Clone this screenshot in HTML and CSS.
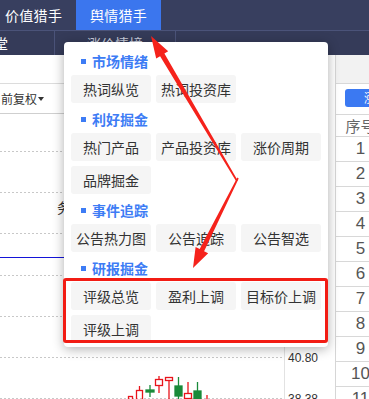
FILE: index.html
```html
<!DOCTYPE html>
<html lang="zh-CN">
<head>
<meta charset="utf-8">
<title>舆情猎手</title>
<link rel="stylesheet" href="styles.css">
</head>
<body>
<div class="app">
  <header class="topnav">
    <div class="tab">价值猎手</div>
    <div class="tab active">舆情猎手</div>
  </header>
  <nav class="subnav">
    <div class="subitem first">讲堂</div>
    <div class="subitem second">涨价情境</div>
    <div class="subitem"></div>
  </nav>
  <main class="content">
    <section class="chart">
      <div class="toolbar"></div>
      <div class="options"><span class="fq">前复权</span><span class="caret"></span></div>
      <svg class="kline" width="284" height="285" viewBox="0 0 284 285">
        <g stroke="#c8c8c8" stroke-width="1" stroke-dasharray="2 2">
          <line x1="0" y1="37.5" x2="284" y2="37.5"/>
          <line x1="0" y1="78.5" x2="284" y2="78.5"/>
          <line x1="0" y1="119.5" x2="284" y2="119.5"/>
          <line x1="0" y1="161.5" x2="284" y2="161.5"/>
          <line x1="0" y1="202.5" x2="284" y2="202.5"/>
          <line x1="0" y1="243.5" x2="284" y2="243.5"/>
          <line x1="0" y1="284.5" x2="284" y2="284.5"/>
        </g>
        <line x1="0" y1="143.5" x2="284" y2="143.5" stroke="#1414d8" stroke-width="1"/>
        <text x="57" y="99" font-size="14" fill="#333" font-family="Noto Sans CJK SC, sans-serif">务</text>
        <g fill="none" stroke="#e8141b" stroke-width="1.3">
          <rect x="128.5" y="282.5" width="4" height="5"/>
          <rect x="136.5" y="276.5" width="6" height="10"/>
          <line x1="139.5" y1="272" x2="139.5" y2="276.5"/>
          <rect x="155.5" y="265.5" width="7" height="6"/>
          <line x1="159" y1="262" x2="159" y2="265.5"/>
          <line x1="159" y1="271.5" x2="159" y2="279"/>
          <rect x="165.5" y="263.5" width="7" height="3"/>
          <line x1="169" y1="266.5" x2="169" y2="285"/>
          <rect x="184.5" y="279.5" width="7" height="5"/>
          <line x1="188" y1="268" x2="188" y2="279.5"/>
          <line x1="207" y1="281" x2="207" y2="285"/>
        </g>
        <g fill="#1a8a3a" stroke="#1a8a3a" stroke-width="1.3">
          <rect x="146" y="276" width="8" height="2"/>
          <line x1="150" y1="271" x2="150" y2="283"/>
          <rect x="175" y="272" width="7" height="10"/>
          <line x1="178.5" y1="263" x2="178.5" y2="285"/>
          <rect x="194" y="277" width="7" height="10"/>
          <line x1="197.5" y1="268" x2="197.5" y2="285"/>
        </g>
      </svg>
    </section>
    <section class="axis">
      <div class="price">40.80</div>
      <div class="price">38.38</div>
    </section>
    <section class="table">
      <div class="thead-bar"></div>
      <div class="btn-row"><span class="blue-btn">涨停</span></div>
      <div class="row head">序号</div>
      <div class="row">1</div>
      <div class="row">2</div>
      <div class="row">3</div>
      <div class="row">4</div>
      <div class="row">5</div>
      <div class="row">6</div>
      <div class="row">7</div>
      <div class="row">8</div>
      <div class="row">9</div>
      <div class="row">10</div>
      <div class="row">11</div>
    </section>
  </main>

  <div class="popup">
    <div class="sec-title">市场情绪</div>
    <div class="btns">
      <div class="btn">热词纵览</div>
      <div class="btn">热词投资库</div>
    </div>
    <div class="sec-title">利好掘金</div>
    <div class="btns">
      <div class="btn">热门产品</div>
      <div class="btn">产品投资库</div>
      <div class="btn">涨价周期</div>
      <div class="btn">品牌掘金</div>
    </div>
    <div class="sec-title">事件追踪</div>
    <div class="btns">
      <div class="btn">公告热力图</div>
      <div class="btn">公告追踪</div>
      <div class="btn">公告智选</div>
    </div>
    <div class="sec-title">研报掘金</div>
    <div class="btns">
      <div class="btn">评级总览</div>
      <div class="btn">盈利上调</div>
      <div class="btn">目标价上调</div>
      <div class="btn">评级上调</div>
    </div>
  </div>

  <div class="mark"></div>

  <svg class="arrows" width="369" height="399" viewBox="0 0 369 399">
    <polygon fill="#f5221b" points="151,36 168.2,51.3 164.4,53.6 237.7,180.6 236.3,181.4 160.1,56.2 156.2,58.5"/>
    <polygon fill="#f5221b" points="193,268 208.2,253.2 204.1,251.2 238.7,178.4 237.3,177.6 199.7,249 195.6,247"/>
  </svg>
</div>
</body>
</html>
```
FILE: styles.css
```css
html, body {
  margin: 0;
  padding: 0;
}
body {
  width: 369px;
  height: 399px;
  overflow: hidden;
  background: #fff;
  font-family: "Noto Sans CJK SC", "Microsoft YaHei", sans-serif;
}
.app {
  position: relative;
  width: 369px;
  height: 399px;
  overflow: hidden;
}
.topnav {
  display: flex;
  height: 30px;
  background: #383f5f;
}
.tab {
  color: #fff;
  font-size: 14px;
  line-height: 30px;
  width: 76px;
  box-sizing: border-box;
  padding-left: 5px;
  letter-spacing: 0.3px;
}
.tab.active {
  width: 85px;
  padding-left: 0;
  text-align: center;
  background: #3b76ee;
}
.subnav {
  display: flex;
  height: 24px;
  background: #353b59;
  border-top: 1px solid #4b5379;
}
.subitem {
  font-size: 14px;
  line-height: 24px;
  color: #fff;
  border-right: 1px solid #4b5379;
  white-space: nowrap;
  overflow: hidden;
}
.subitem.first {
  width: 54px;
  text-indent: -20px;
}
.subitem.second {
  width: 120px;
  text-align: center;
  color: #c9cddb;
}
.subitem:last-child {
  border-right: none;
  flex: 1;
}
.content {
  display: grid;
  grid-template-columns: 284px 51px 50px;
  height: 344px;
}
.chart {
  display: flex;
  flex-direction: column;
  overflow: hidden;
}
.toolbar {
  height: 28px;
  border-bottom: 1px solid #dcdcdc;
  flex: none;
}
.options {
  height: 29px;
  border-bottom: 1px solid #cfcfcf;
  display: flex;
  align-items: center;
  padding-left: 1px;
  flex: none;
}
.fq {
  font-size: 12px;
  color: #333;
}
.caret {
  width: 0;
  height: 0;
  border-left: 3.5px solid transparent;
  border-right: 3.5px solid transparent;
  border-top: 4px solid #333;
  margin-left: 1px;
}
.kline {
  display: block;
  flex: none;
}
.axis {
  border-left: 1px solid #e2e2e2;
  display: flex;
  flex-direction: column;
  padding-top: 295px;
  padding-left: 3px;
  gap: 25px;
}
.price {
  font-size: 12px;
  line-height: 16px;
  color: #333;
  font-family: "Liberation Sans", Arial, sans-serif;
}
.table {
  border-left: 1px solid #d6d6d6;
  display: flex;
  flex-direction: column;
}
.thead-bar {
  height: 28px;
  background: #f2f2f2;
  border-bottom: 1px solid #d8d8d8;
  flex: none;
}
.btn-row {
  height: 31px;
  border-bottom: 1px solid #d8d8d8;
  display: flex;
  align-items: flex-start;
  padding: 5px 0 0 9px;
  box-sizing: border-box;
  flex: none;
}
.blue-btn {
  flex: none;
  height: 18px;
  width: 62px;
  background: #3b79f2;
  border-radius: 3px;
  color: #fff;
  font-size: 12px;
  line-height: 18px;
  text-align: center;
}
.row {
  height: 24px;
  border-bottom: 1px solid #d8d8d8;
  text-align: center;
  font-size: 17px;
  line-height: 24px;
  color: #555;
  font-family: "Liberation Sans", Arial, sans-serif;
  flex: none;
}
.row.head {
  height: 21px;
  line-height: 21px;
  font-size: 15px;
  color: #666;
  font-family: "Noto Sans CJK SC", sans-serif;
}
.popup {
  position: absolute;
  left: 64px;
  top: 42px;
  width: 264px;
  box-sizing: border-box;
  padding: 3px 7px 4px;
  background: #fff;
  border-radius: 4px;
  box-shadow: 0 2px 12px rgba(0, 0, 0, 0.32);
}
.sec-title {
  height: 30px;
  display: flex;
  align-items: center;
  gap: 6px;
  padding-left: 10px;
  padding-top: 2px;
  box-sizing: border-box;
  font-size: 14px;
  font-weight: bold;
  color: #3d7cf5;
}
.sec-title::before {
  content: "";
  width: 5px;
  height: 5px;
  background: #3d7cf5;
}
.btns {
  display: grid;
  grid-template-columns: repeat(3, 80px);
  gap: 5px;
}
.btn {
  height: 28px;
  background: #f5f5f5;
  border-radius: 3px;
  font-size: 14px;
  color: #333;
  display: flex;
  align-items: center;
  justify-content: center;
  white-space: nowrap;
}
.mark {
  position: absolute;
  left: 63px;
  top: 278px;
  width: 265px;
  height: 65px;
  box-sizing: border-box;
  border: 3px solid #f21c14;
  border-radius: 3px;
}
.arrows {
  position: absolute;
  left: 0;
  top: 0;
  pointer-events: none;
}
```
